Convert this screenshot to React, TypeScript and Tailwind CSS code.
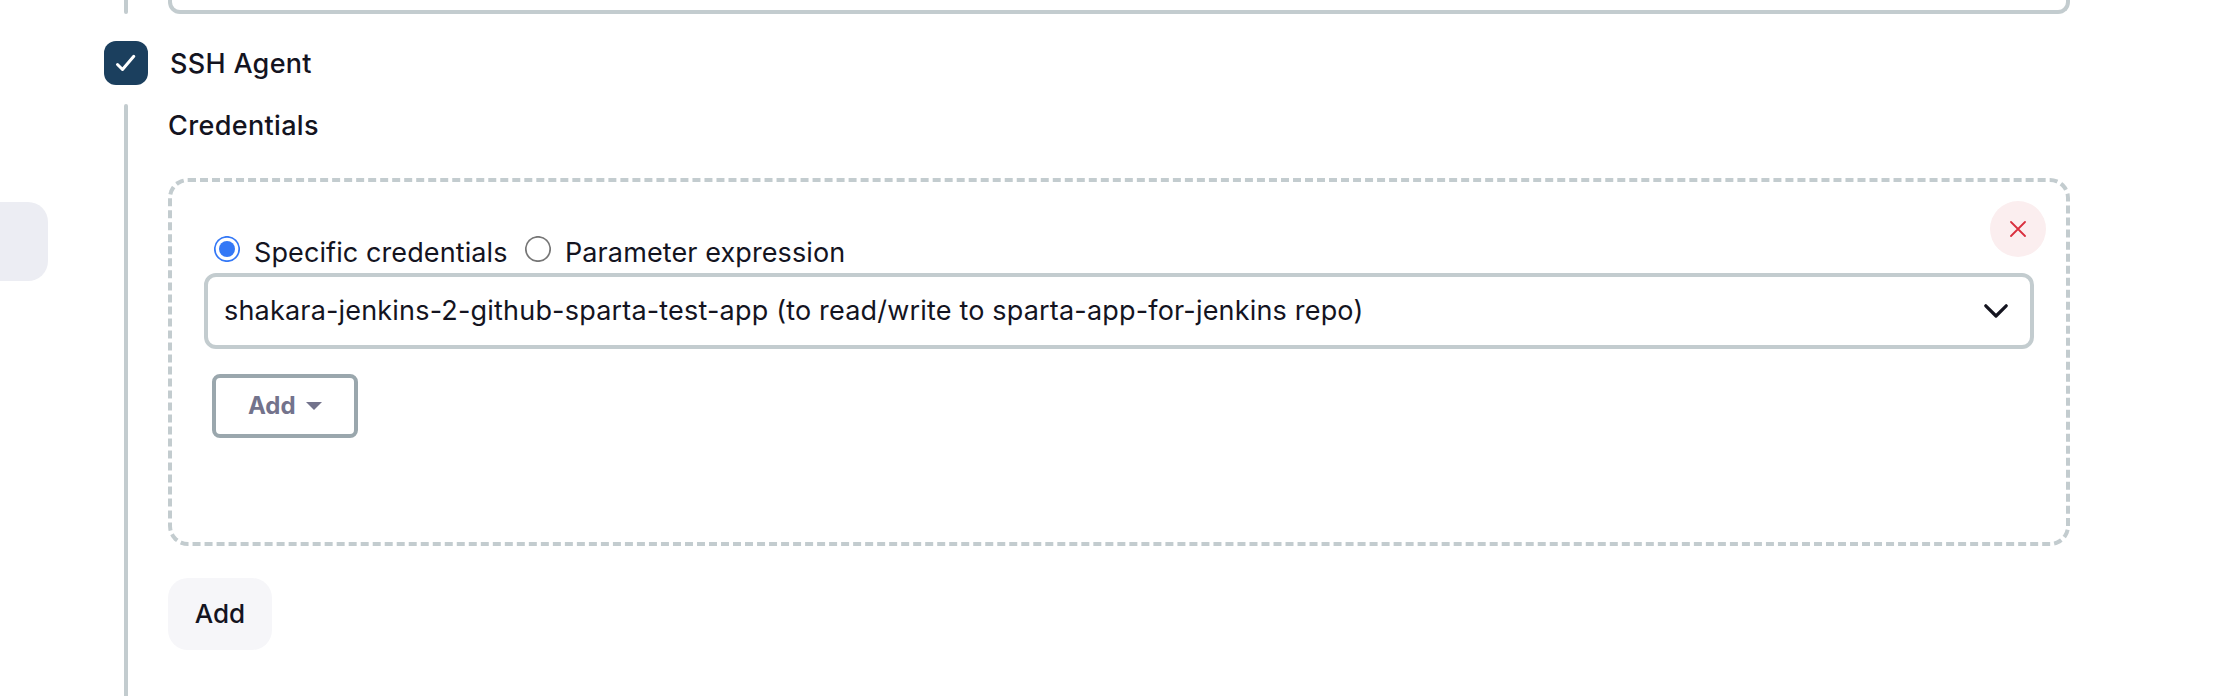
function Radio({ checked }: { checked?: boolean }) {
  return (
    <svg className="size-[26px] shrink-0" viewBox="0 0 26 26" fill="none">
      <circle cx="13" cy="13" r="12.2" stroke={checked ? "#3478f6" : "#767676"} strokeWidth="1.7" />
      {checked && <circle cx="13" cy="13" r="8" fill="#3478f6" />}
    </svg>
  );
}

function Rail({ className }: { className: string }) {
  return <div className={`ml-5 w-1 shrink-0 bg-[#c3cccf] ${className}`} />;
}

function SshCredentials() {
  return (
    <div className="relative mt-[30px] h-[368px] rounded-[20px] border-4 border-dashed border-[#c3cccf] px-8 pt-[54px]">
      <button className="absolute top-[19px] right-5 flex size-14 items-center justify-center rounded-full bg-[#fbeeef]">
        <svg className="size-4" viewBox="0 0 16 16" fill="none" stroke="#d9303e" strokeWidth="1.8" strokeLinecap="round">
          <path d="M1 1L15 15M15 1L1 15" />
        </svg>
      </button>
      <div className="flex h-[37px] items-start pl-[10px]">
        <Radio checked />
        <span className="ml-[14px] w-[271px] pt-[3px] leading-[27px] tracking-[0.1px] whitespace-nowrap">Specific credentials</span>
        <Radio />
        <span className="ml-[14px] pt-[3px] leading-[27px] tracking-[0.1px] whitespace-nowrap">Parameter expression</span>
      </div>
      <div className="flex h-[76px] w-[1830px] items-center justify-between rounded-xl border-4 border-[#c3cccf] pr-[22px] pl-4">
        <span className="tracking-[0.185px] whitespace-nowrap">shakara-jenkins-2-github-sparta-test-app (to read/write to sparta-app-for-jenkins repo)</span>
        <svg className="h-[14px] w-6" viewBox="0 0 24 14" fill="none" stroke="#14141f" strokeWidth="3.2" strokeLinecap="round" strokeLinejoin="round">
          <path d="M1.8 1.8L12 12L22.2 1.8" />
        </svg>
      </div>
      <button className="mt-[25px] ml-2 flex h-16 w-[146px] items-center rounded-lg border-4 border-[#9aa7ad] pl-8 text-[24px] font-bold text-[#73738c]">
        Add
        <svg className="ml-[10px] h-2 w-4" viewBox="0 0 16 8" fill="#73738c">
          <path d="M0 0H16L8 8Z" />
        </svg>
      </button>
    </div>
  );
}

export default function App() {
  return (
    <div className="flex h-[696px] w-[2216px] overflow-hidden bg-white font-['Inter',sans-serif] text-[27px] text-[#14141f]">
      <aside className="w-12 shrink-0 pt-[202px]">
        <div className="h-[79px] rounded-r-[20px] bg-[#ecedf3]" />
      </aside>
      <main className="ml-14 flex flex-col">
        <div className="flex h-[14px]">
          <Rail className="rounded-b-sm" />
          <div className="ml-10 w-[1902px] rounded-b-xl border-4 border-t-0 border-[#c3cccf]" />
        </div>
        <label className="mt-[27px] flex h-11 items-center">
          <span className="flex size-11 items-center justify-center rounded-xl bg-[#1b3f5e]">
            <svg className="size-[22px]" viewBox="0 0 22 22" fill="none" stroke="#fff" strokeWidth="3" strokeLinecap="round" strokeLinejoin="round">
              <path d="M2.5 12.5L7.5 17.5L18.8 4.3" />
            </svg>
          </span>
          <span className="ml-[22px] pt-0.5 font-medium tracking-[0.3px]">SSH Agent</span>
        </label>
        <div className="mt-[19px] flex flex-1">
          <Rail className="rounded-t-sm" />
          <section className="ml-10 w-[1902px]">
            <h2 className="h-11 leading-[44px] font-medium tracking-[0.35px]">Credentials</h2>
            <SshCredentials />
            <button className="mt-8 flex h-[72px] w-[104px] items-center justify-center rounded-[20px] bg-[#f6f6f9] pb-0.5 text-[26px] font-medium">Add</button>
          </section>
        </div>
      </main>
    </div>
  );
}
